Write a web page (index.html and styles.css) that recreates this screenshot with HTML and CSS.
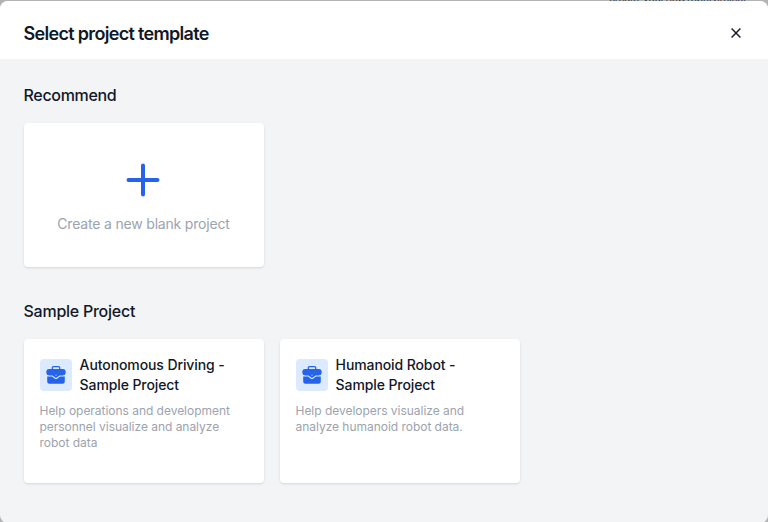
FILE: index.html
```html
<!DOCTYPE html>
<html lang="en">
<head>
<meta charset="utf-8">
<title>Select project template</title>
<link rel="stylesheet" href="styles.css">
</head>
<body>
<div class="backdrop-text" aria-hidden="true"><span>create,</span><span>your</span><span>new</span><span>robot</span><span>project</span></div>
<main class="modal" role="dialog" aria-labelledby="title">
  <header class="modal-header">
    <h1 id="title">Select project template</h1>
    <button class="close" aria-label="Close">
      <svg width="16" height="16" viewBox="0 0 16 16"><path d="M3.6 3.6l8.800 8.800M12.400 3.600l-8.800 8.800"/></svg>
    </button>
  </header>
  <div class="modal-body">
    <section>
      <h2>Recommend</h2>
      <div class="cards">
        <article class="card blank">
          <svg class="plus" width="40" height="40" viewBox="0 0 40 40"><path d="M20 5.5v29M5.5 20h29"/></svg>
          <span class="blank-label">Create a new blank project</span>
        </article>
      </div>
    </section>
    <section>
      <h2 class="sample">Sample Project</h2>
      <div class="cards">
        <article class="card">
          <div class="card-head">
            <span class="icon"><svg width="20" height="20" viewBox="0 0 20 20"><path class="handle" d="M6.300 4.500V2.700Q6.300 1.600 7.400 1.600h5.200Q13.700 1.600 13.700 2.700V4.500"/><path d="M3.300 4h13.400Q19.700 4 19.700 7.300 19.700 10.500 16.200 10.500H13.600L10.800 12.600Q10 13.200 9.200 12.600L6.400 10.500H3.800Q.3 10.500.3 7.300.3 4 3.300 4zM1.200 11.400H6L8.600 13.500Q10 14.600 11.400 13.500L14 11.400h4.800v5.200q0 2.200-2.200 2.200H3.400q-2.200 0-2.200-2.200z"/><path class="clasp" d="M9.500 9.800h1v1h-1z"/></svg></span>
            <h3>Autonomous Driving -<br>Sample Project</h3>
          </div>
          <p>Help operations and development<br>personnel visualize and analyze<br>robot data</p>
        </article>
        <article class="card">
          <div class="card-head">
            <span class="icon"><svg width="20" height="20" viewBox="0 0 20 20"><path class="handle" d="M6.300 4.500V2.700Q6.300 1.600 7.400 1.600h5.200Q13.700 1.600 13.700 2.700V4.500"/><path d="M3.300 4h13.400Q19.700 4 19.700 7.300 19.700 10.500 16.200 10.500H13.600L10.800 12.600Q10 13.200 9.200 12.600L6.400 10.500H3.800Q.3 10.500.3 7.300.3 4 3.300 4zM1.200 11.400H6L8.600 13.500Q10 14.600 11.400 13.500L14 11.400h4.800v5.200q0 2.200-2.200 2.200H3.400q-2.200 0-2.200-2.200z"/><path class="clasp" d="M9.500 9.800h1v1h-1z"/></svg></span>
            <h3>Humanoid Robot -<br>Sample Project</h3>
          </div>
          <p>Help developers visualize and<br>analyze humanoid robot data.</p>
        </article>
      </div>
    </section>
  </div>
</main>
</body>
</html>
```
FILE: styles.css
```css
* { box-sizing: border-box; }
body {
  margin: 0;
  height: 522px;
  overflow: hidden;
  padding-top: 1px;
  background: #b3b3b3;
  font-family: Inter, sans-serif;
  color: #111827;
}
.backdrop-text {
  position: absolute;
  top: -10px;
  left: 609px;
  display: flex;
  justify-content: space-between;
  width: 137px;
  font-size: 11px;
  line-height: 16px;
  letter-spacing: -0.5px;
  color: #374151;
}
.modal {
  position: relative;
  height: 522px;
  border-radius: 8px;
  overflow: hidden;
  background: #f3f4f6;
}
.modal-header {
  display: flex;
  align-items: center;
  justify-content: space-between;
  height: 58px;
  padding: 7px 24px 0 23.5px;
  background: #fff;
}
h1, h2, h3, p { margin: 0; }
h1 { font-size: 18px; line-height: 28px; font-weight: 600; letter-spacing: -0.68px; }
.close { display: flex; padding: 0; margin-bottom: 2px; border: 0; background: none; }
.close path { fill: none; stroke: #111827; stroke-width: 1.4; }
.modal-body {
  display: flex;
  flex-direction: column;
  gap: 32px;
  padding: 24px;
}
h2 {
  margin: 0 0 16px -0.5px;
  font-size: 16px;
  line-height: 24px;
  font-weight: 500;
  letter-spacing: -0.32px;
}
.sample { letter-spacing: -0.25px; }
.cards { display: flex; gap: 16px; }
.card {
  width: 240px;
  height: 144px;
  padding: 16px;
  border-radius: 4px;
  background: #fff;
  box-shadow: 0 1px 3px rgba(0, 0, 0, .1), 0 1px 2px -1px rgba(0, 0, 0, .1);
}
.blank {
  display: flex;
  flex-direction: column;
  align-items: center;
  justify-content: center;
  gap: 14px;
  padding: 20px 18px 16px 16px;
}
.plus path { fill: none; stroke: #2563eb; stroke-width: 4; stroke-linecap: round; }
.blank-label {
  padding-left: 1px;
  font-size: 14px;
  line-height: 20px;
  letter-spacing: -0.18px;
  color: #9ca3af;
}
.card-head { display: flex; align-items: center; gap: 8px; }
.icon {
  display: flex;
  align-items: center;
  justify-content: center;
  flex: none;
  width: 32px;
  height: 32px;
  border-radius: 4px;
  background: #dbeafe;
}
.icon path { fill: #2563eb; }
.icon .handle { fill: none; stroke: #2563eb; stroke-width: 1.3; }
.icon .clasp { fill: #dbeafe; }
h3 {
  margin-left: -0.4px;
  font-size: 14px;
  line-height: 20px;
  font-weight: 500;
  letter-spacing: -0.1px;
  white-space: nowrap;
}
p {
  margin: 8px 0 0 -0.5px;
  font-size: 12px;
  line-height: 16px;
  letter-spacing: -0.03px;
  color: #9ca3af;
  white-space: nowrap;
}
```
